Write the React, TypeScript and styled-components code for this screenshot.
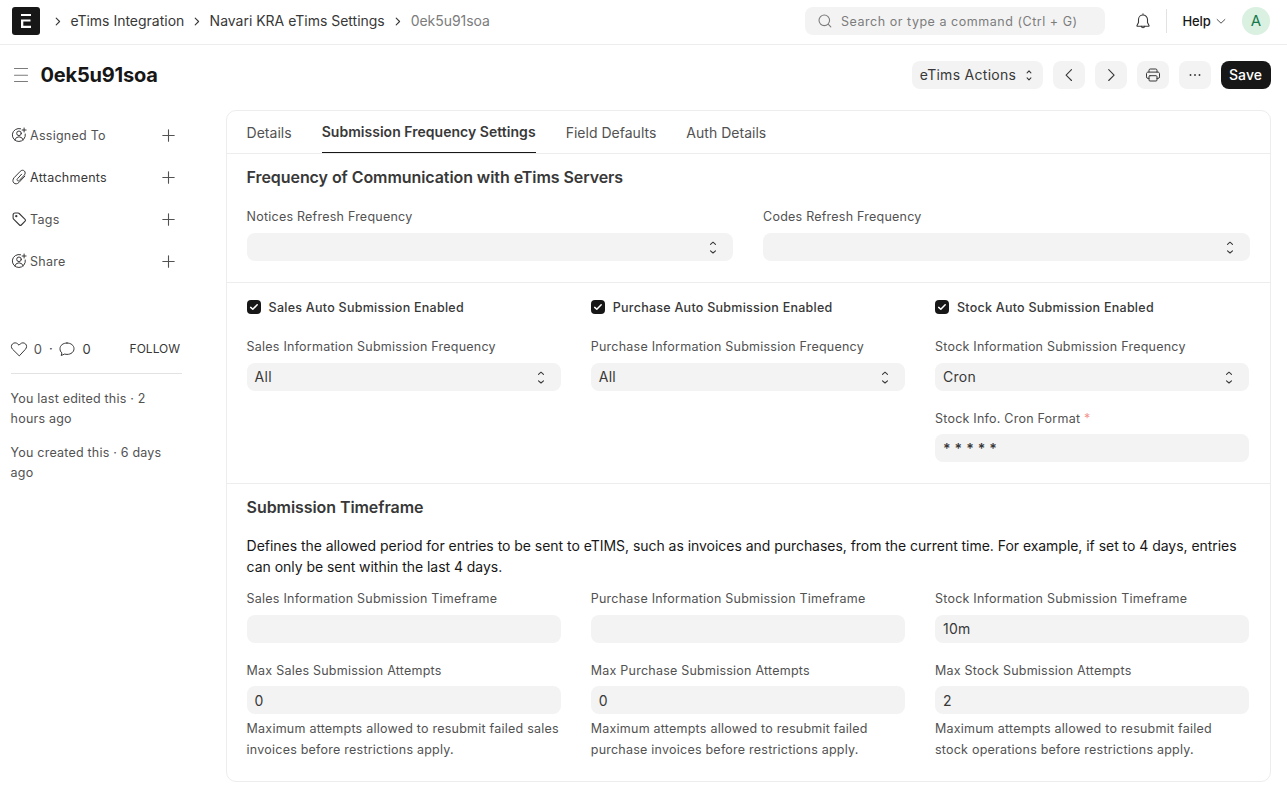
import React from "react";
import styled, { createGlobalStyle } from "styled-components";

const GlobalStyle = createGlobalStyle`
  *, *::before, *::after { box-sizing: border-box; }
  body {
    margin: 0;
    background: #fff;
    color: #383838;
    font-family: Inter, "Liberation Sans", sans-serif;
    font-size: 14px;
    font-weight: 420;
    line-height: 21px;
    letter-spacing: 0;
  }
  button, input { font: inherit; letter-spacing: inherit; color: inherit; }
`;

const Svg = styled.svg`
  display: block;
  flex: none;
  fill: none;
  stroke: currentColor;
  stroke-linecap: round;
  stroke-linejoin: round;
`;

/* ---------- icons ---------- */

const ChevronRight = () => (
  <Svg width="6" height="10" viewBox="0 0 6 10" strokeWidth="1.1">
    <path d="M1.2 2.1 4.6 5.5 1.2 8.9" />
  </Svg>
);

const SearchIcon = () => (
  <Svg width="16" height="16" viewBox="0 0 16 16" strokeWidth="1.1">
    <circle cx="7.3" cy="7.3" r="5.3" />
    <path d="m11.4 11.4 2.4 2.4" />
  </Svg>
);

const BellIcon = () => (
  <Svg width="16" height="16" viewBox="0 0 16 16" strokeWidth="1.1">
    <path d="M8 .9v.9M3.5 6.5a4.5 4.5 0 0 1 9 0v3l1.5 2.9c.2.4 0 .8-.5.8h-11c-.5 0-.7-.4-.5-.8l1.5-2.9z" />
    <path d="M6.3 13.4a1.75 1.75 0 0 0 3.4 0" />
  </Svg>
);

const ChevronDown = () => (
  <Svg width="10" height="6" viewBox="0 0 10 6" strokeWidth="1">
    <path d="M1.1 1.5 5 5.2l3.9-3.7" />
  </Svg>
);

const SelectIcon = () => (
  <Svg width="8" height="14" viewBox="0 0 8 14" strokeWidth="1.1">
    <path d="M1.5 4.4 4 2.2 6.5 4.4M1.5 10.8 4 13 6.5 10.8" />
  </Svg>
);

const SmallSelectIcon = () => (
  <Svg width="6" height="12" viewBox="0 0 6 12" strokeWidth="1.1">
    <path d="M1.1 3.8 3 1.9 4.9 3.8M1.1 8.9 3 10.8 4.9 8.9" />
  </Svg>
);

const MenuIcon = () => (
  <Svg width="14" height="14" viewBox="0 0 14 14" strokeWidth="1.1">
    <path d="M.5.5h13M.5 7.3h13M.5 13.5h13" />
  </Svg>
);

const LeftIcon = () => (
  <Svg width="16" height="16" viewBox="0 0 16 16" strokeWidth="1.1">
    <path d="M10.5 2.7 5.1 8.1l5.4 5.4" />
  </Svg>
);

const RightIcon = () => (
  <Svg width="16" height="16" viewBox="0 0 16 16" strokeWidth="1.1">
    <path d="m5.7 2.7 5.4 5.4-5.4 5.4" />
  </Svg>
);

const PrinterIcon = () => (
  <Svg width="16" height="16" viewBox="0 0 16 16" strokeWidth="1">
    <path d="M4 5V3.2c0-.7.5-1.2 1.2-1.2h5.6c.7 0 1.2.5 1.2 1.2V5" />
    <path d="M4 11.4H3a1.5 1.5 0 0 1-1.5-1.5V6.7C1.5 5.8 2.2 5.1 3 5.1h10c.8 0 1.5.7 1.5 1.6v3.2a1.5 1.5 0 0 1-1.5 1.5h-1" />
    <rect x="4" y="8.7" width="8" height="5.3" rx="1" />
  </Svg>
);

const DotsIcon = () => (
  <Svg width="16" height="16" viewBox="0 0 16 16" strokeWidth="0">
    <g fill="currentColor">
      <circle cx="3.5" cy="8" r="0.95" />
      <circle cx="8" cy="8" r="0.95" />
      <circle cx="12.5" cy="8" r="0.95" />
    </g>
  </Svg>
);

const AssignIcon = () => (
  <Svg width="16" height="16" viewBox="0 0 16 16" strokeWidth="1">
    <path d="M9.6 1.7A6.5 6.5 0 1 0 14.3 7" />
    <circle cx="8" cy="6.3" r="2.3" />
    <path d="M3.8 12.9a4.4 4.4 0 0 1 8.4 0" />
    <path d="M13.1 1v4M11.1 3h4" />
  </Svg>
);

const ClipIcon = () => (
  <Svg width="16" height="16" viewBox="0 0 16 16" strokeWidth="1">
    <path d="M10.6 5.2 6.5 9.7c-.6.6-.6 1.4-.1 1.9s1.3.5 1.9-.1l4.9-5.3c1.2-1.3 1.3-3.1.2-4.2s-2.9-1-4.1.3L3.1 8.7c-1.5 1.7-1.6 3.9-.3 5.2s3.5 1.3 5.1-.4l5.9-6.3" />
  </Svg>
);

const TagIcon = () => (
  <Svg width="16" height="16" viewBox="0 0 16 16" strokeWidth="1.1">
    <path d="M4.1 2h3c.4 0 .8.2 1.1.5l5.9 5.9c.5.5.5 1.3 0 1.8l-3.8 3.8c-.5.5-1.3.5-1.8 0L2.6 8.1C2.3 7.8 2.1 7.4 2.1 7V4c0-1.2.9-2 2-2z" />
    <circle cx="5.3" cy="5.2" r=".6" fill="currentColor" />
  </Svg>
);

const PlusSvg = styled(Svg)`
  color: #525252;
`;

const PlusIcon = () => (
  <PlusSvg width="13" height="13" viewBox="0 0 13 13" strokeWidth="1.1">
    <path d="M6.5.8v11.4M.8 6.5h11.4" />
  </PlusSvg>
);

const HeartIcon = () => (
  <Svg width="18" height="16" viewBox="0 0 18 16" strokeWidth="1">
    <path d="M9 14.6 2.5 8.2C1 6.6 1 4.3 2.5 2.9s3.7-1.4 5.2 0L9 4.2l1.3-1.3c1.5-1.4 3.7-1.4 5.2 0s1.5 3.7 0 5.3z" />
  </Svg>
);

const CommentIcon = () => (
  <Svg width="18" height="16" viewBox="0 0 18 16" strokeWidth="1">
    <path d="M9 2c4 0 7 2.4 7 5.7s-3 5.7-7 5.7c-.9 0-1.7-.1-2.5-.3L3.2 14.5l.7-2.6C2.6 10.9 2 9.4 2 7.7c0-3.3 3-5.7 7-5.7z" />
  </Svg>
);

const CheckIcon = () => (
  <Svg width="10" height="8" viewBox="0 0 10 8" strokeWidth="1.5">
    <path d="M1.7 4.4 3.8 6.3 8.2 1.7" />
  </Svg>
);

/* ---------- navbar ---------- */

const Navbar = styled.header`
  display: flex;
  align-items: center;
  height: 45px;
  padding: 0 17px 2px 12px;
  border-bottom: 1px solid #ededed;
`;

const Logo = styled.div`
  display: flex;
  align-items: center;
  justify-content: center;
  width: 28px;
  height: 28px;
  border-radius: 3px;
  background: #171717;
`;

const Breadcrumbs = styled.nav`
  display: flex;
  align-items: center;
  flex: 1;
  margin-left: 15px;
  line-height: 20px;
`;

const Crumb = styled.span<{ $current?: boolean }>`
  display: flex;
  align-items: center;
  gap: ${(p) => (p.$current ? 10 : 9.4)}px;
  margin-right: 9.9px;
  padding-bottom: 1px;
  color: #383838;
  letter-spacing: ${(p) => (p.$current ? "-0.03px" : "-0.01px")};
  span { color: ${(p) => (p.$current ? "#7c7c7c" : "inherit")}; }
`;

const SearchBox = styled.div`
  display: flex;
  align-items: center;
  gap: 8px;
  width: 300px;
  height: 28px;
  padding-left: 12px;
  border-radius: 8px;
  background: #f3f3f3;
  color: #7c7c7c;
  font-size: 12.5px;
  letter-spacing: 0.53px;
`;

const Bell = styled.div`
  margin-left: 30px;
  color: #383838;
`;

const NavDivider = styled.div`
  width: 1px;
  height: 24px;
  margin: 0 15.5px 0 15px;
  background: #e2e2e2;
`;

const Help = styled.div`
  display: flex;
  align-items: center;
  gap: 5px;
  width: 59.5px;
  color: #171717;
  font-size: 13px;
  font-weight: 500;
  letter-spacing: -0.1px;
  svg { color: #525252; }
`;

const Avatar = styled.div`
  width: 28px;
  height: 28px;
  border-radius: 50%;
  background: #daf0e1;
  color: #16794c;
  font-size: 15px;
  line-height: 28px;
  text-align: center;
`;

/* ---------- page head ---------- */

const PageHead = styled.div`
  display: flex;
  align-items: center;
  height: 60px;
  padding: 0 16px 0 14px;
`;

const MenuToggle = styled.div`
  color: #7c7c7c;
`;

const Title = styled.h1`
  flex: 1;
  margin: 0 0 0 12.5px;
  color: #171717;
  font-size: 20px;
  font-weight: 700;
  line-height: 28px;
  letter-spacing: -0.2px;
`;

const Actions = styled.div`
  display: flex;
  gap: 10px;
`;

const Button = styled.button<{ $width: number; $primary?: boolean }>`
  display: flex;
  align-items: center;
  justify-content: center;
  gap: 9px;
  width: ${(p) => p.$width}px;
  height: 28px;
  padding: 0;
  border: 0;
  border-radius: 8px;
  background: ${(p) => (p.$primary ? "#171717" : "#f3f3f3")};
  color: ${(p) => (p.$primary ? "#fff" : "#383838")};
  font-weight: ${(p) => (p.$primary ? 500 : 420)};
  letter-spacing: ${(p) => (p.$primary ? 0.1 : 0.28)}px;
`;

const MenuButton = styled(Button)`
  padding-right: 3px;
`;

const ButtonText = styled.span`
  padding: 0 1px 1px 0;
  line-height: 20px;
`;

/* ---------- sidebar ---------- */

const Body = styled.div`
  display: flex;
  align-items: flex-start;
  padding: 5px 16px 18px 10.6px;
`;

const Sidebar = styled.aside`
  width: 171px;
  margin-right: 44.4px;
  padding-top: 4px;
  color: #525252;
  font-size: 12.5px;
  letter-spacing: 0.25px;
`;

const SideRow = styled.div<{ $strong?: boolean }>`
  display: flex;
  align-items: center;
  gap: 3.5px;
  height: 42px;
  padding-right: 7px;
  color: #383838;
  span {
    flex: 1;
    color: ${(p) => (p.$strong ? "#383838" : "#525252")};
  }
`;

const StatsRow = styled.div`
  display: flex;
  align-items: center;
  margin-top: 56px;
  padding-bottom: 14px;
  height: 36px;
  border-bottom: 1px solid #e2e2e2;
  color: #383838;
  font-size: 13px;
  letter-spacing: 0;
  svg { margin-left: -0.7px; }
`;

const Count = styled.span<{ $muted?: boolean }>`
  margin-left: ${(p) => (p.$muted ? 5.8 : 6.5)}px;
  padding-top: 1px;
  color: ${(p) => (p.$muted ? "#525252" : "#383838")};
`;

const Dot = styled.span`
  margin: 0 6px 0 7px;
`;

const Follow = styled.span`
  margin-left: auto;
  margin-right: 1.5px;
  font-size: 12px;
`;

const Activity = styled.p`
  margin: 0 0 14px;
  line-height: 20px;
  letter-spacing: 0.21px;
  ${StatsRow} + & { margin-top: 15px; }
`;

/* ---------- form ---------- */

const Card = styled.main`
  flex: 1;
  height: 672px;
  border: 1px solid #ededed;
  border-radius: 10px;
`;

const Tabs = styled.div`
  display: flex;
  gap: 30px;
  height: 43px;
  padding: 0 19.6px;
  border-bottom: 1px solid #ededed;
`;

const Tab = styled.div<{ $active?: boolean }>`
  height: 42px;
  line-height: ${(p) => (p.$active ? 42 : 43)}px;
  border-bottom: ${(p) => (p.$active ? "1px solid #171717" : "0")};
  color: ${(p) => (p.$active ? "#383838" : "#525252")};
  font-weight: ${(p) => (p.$active ? 600 : 420)};
  letter-spacing: ${(p) => (p.$active ? 0.03 : 0.015)}px;
`;

const Section = styled.section<{ $height?: number }>`
  height: ${(p) => (p.$height ? p.$height + "px" : "auto")};
  padding: 11px 20.4px 0 19.6px;
  & + & { border-top: 1px solid #ededed; }
`;

const SectionTitle = styled.h2`
  margin: 0;
  font-size: 16px;
  font-weight: 600;
  line-height: 24px;
  letter-spacing: -0.07px;
`;

const Columns = styled.div<{ $count: number; $top: number }>`
  display: grid;
  grid-template-columns: repeat(${(p) => p.$count}, ${(p) => (p.$count === 3 ? "314.2px" : "1fr")});
  column-gap: 30px;
  padding-top: ${(p) => p.$top}px;
`;

const Description = styled.p`
  margin: 16px 0 0;
  color: #171717;
  letter-spacing: -0.037px;
`;

const FieldBox = styled.div`
  margin-bottom: 18px;
`;

const Label = styled.div`
  height: 19.5px;
  margin-bottom: 6px;
  color: #525252;
  font-size: 12.5px;
  line-height: 19.5px;
  letter-spacing: 0.23px;
`;

const Required = styled.span`
  color: #f1938e;
`;

const Control = styled.div<{ $heavy?: boolean }>`
  display: flex;
  align-items: center;
  justify-content: space-between;
  height: 28px;
  padding: 0 16px 0 8px;
  border-radius: 8px;
  background: #f3f3f3;
  font-weight: ${(p) => (p.$heavy ? 600 : 420)};
  letter-spacing: 0.26px;
`;

const Hint = styled.div`
  margin-top: 4px;
  color: #525252;
  font-size: 12.5px;
  letter-spacing: 0.23px;
  white-space: pre-line;
`;

const CheckRow = styled.label`
  display: flex;
  align-items: center;
  gap: 8px;
  height: 21px;
  margin-bottom: 19.2px;
  font-size: 12.5px;
  font-weight: 500;
  letter-spacing: 0.26px;
`;

const CheckBox = styled.span`
  display: flex;
  align-items: center;
  justify-content: center;
  width: 14px;
  height: 14px;
  margin-bottom: 1px;
  border-radius: 4px;
  background: #171717;
  color: #fff;
`;

type FieldProps = {
  label: string;
  value?: string;
  select?: boolean;
  required?: boolean;
  heavy?: boolean;
  hint?: string;
};

const Field = ({ label, value = "", select, required, heavy, hint }: FieldProps) => (
  <FieldBox>
    <Label>
      {label}
      {required && <Required> *</Required>}
    </Label>
    <Control $heavy={heavy}>
      <span>{value}</span>
      {select && <SelectIcon />}
    </Control>
    {hint && <Hint>{hint}</Hint>}
  </FieldBox>
);

const Check = ({ label }: { label: string }) => (
  <CheckRow>
    <CheckBox>
      <CheckIcon />
    </CheckBox>
    {label}
  </CheckRow>
);

export default function App() {
  return (
    <>
      <GlobalStyle />
      <Navbar>
        <Logo>
          <svg width="10" height="14" viewBox="0 0 10 14" fill="#fff">
            <path d="M0 0h10v2H0zM0 5.5h9.5v2H2.3v4.3H10V14H0z" />
          </svg>
        </Logo>
        <Breadcrumbs>
          <Crumb><ChevronRight /><span>eTims Integration</span></Crumb>
          <Crumb><ChevronRight /><span>Navari KRA eTims Settings</span></Crumb>
          <Crumb $current><ChevronRight /><span>0ek5u91soa</span></Crumb>
        </Breadcrumbs>
        <SearchBox>
          <SearchIcon />
          Search or type a command (Ctrl + G)
        </SearchBox>
        <Bell><BellIcon /></Bell>
        <NavDivider />
        <Help>Help <ChevronDown /></Help>
        <Avatar>A</Avatar>
      </Navbar>

      <PageHead>
        <MenuToggle><MenuIcon /></MenuToggle>
        <Title>0ek5u91soa</Title>
        <Actions>
          <MenuButton $width={131}><ButtonText>eTims Actions</ButtonText><SmallSelectIcon /></MenuButton>
          <Button $width={32}><LeftIcon /></Button>
          <Button $width={32}><RightIcon /></Button>
          <Button $width={32}><PrinterIcon /></Button>
          <Button $width={32}><DotsIcon /></Button>
          <Button $width={50} $primary><ButtonText>Save</ButtonText></Button>
        </Actions>
      </PageHead>

      <Body>
        <Sidebar>
          <SideRow><AssignIcon /><span>Assigned To</span><PlusIcon /></SideRow>
          <SideRow $strong><ClipIcon /><span>Attachments</span><PlusIcon /></SideRow>
          <SideRow><TagIcon /><span>Tags</span><PlusIcon /></SideRow>
          <SideRow><AssignIcon /><span>Share</span><PlusIcon /></SideRow>
          <StatsRow>
            <HeartIcon />
            <Count $muted>0</Count>
            <Dot>·</Dot>
            <CommentIcon />
            <Count>0</Count>
            <Follow>FOLLOW</Follow>
          </StatsRow>
          <Activity>You last edited this · 2 hours ago</Activity>
          <Activity>You created this · 6 days ago</Activity>
        </Sidebar>

        <Card>
          <Tabs>
            <Tab>Details</Tab>
            <Tab $active>Submission Frequency Settings</Tab>
            <Tab>Field Defaults</Tab>
            <Tab>Auth Details</Tab>
          </Tabs>

          <Section $height={128}>
            <SectionTitle>Frequency of Communication with eTims Servers</SectionTitle>
            <Columns $count={2} $top={18.1}>
              <Field label="Notices Refresh Frequency" select />
              <Field label="Codes Refresh Frequency" select />
            </Columns>
          </Section>

          <Section $height={201}>
            <Columns $count={3} $top={3}>
              <div>
                <Check label="Sales Auto Submission Enabled" />
                <Field label="Sales Information Submission Frequency" value="All" select />
              </div>
              <div>
                <Check label="Purchase Auto Submission Enabled" />
                <Field label="Purchase Information Submission Frequency" value="All" select />
              </div>
              <div>
                <Check label="Stock Auto Submission Enabled" />
                <Field label="Stock Information Submission Frequency" value="Cron" select />
                <Field label="Stock Info. Cron Format" value="* * * * *" required heavy />
              </div>
            </Columns>
          </Section>

          <Section>
            <SectionTitle>Submission Timeframe</SectionTitle>
            <Description>
              Defines the allowed period for entries to be sent to eTIMS, such as invoices and
              purchases, from the current time. For example, if set to 4 days, entries can only be
              sent within the last 4 days.
            </Description>
            <Columns $count={3} $top={12.2}>
              <div>
                <Field label="Sales Information Submission Timeframe" />
                <Field
                  label="Max Sales Submission Attempts"
                  value="0"
                  hint={"Maximum attempts allowed to resubmit failed sales\ninvoices before restrictions apply."}
                />
              </div>
              <div>
                <Field label="Purchase Information Submission Timeframe" />
                <Field
                  label="Max Purchase Submission Attempts"
                  value="0"
                  hint={"Maximum attempts allowed to resubmit failed\npurchase invoices before restrictions apply."}
                />
              </div>
              <div>
                <Field label="Stock Information Submission Timeframe" value="10m" />
                <Field
                  label="Max Stock Submission Attempts"
                  value="2"
                  hint={"Maximum attempts allowed to resubmit failed\nstock operations before restrictions apply."}
                />
              </div>
            </Columns>
          </Section>
        </Card>
      </Body>
    </>
  );
}
